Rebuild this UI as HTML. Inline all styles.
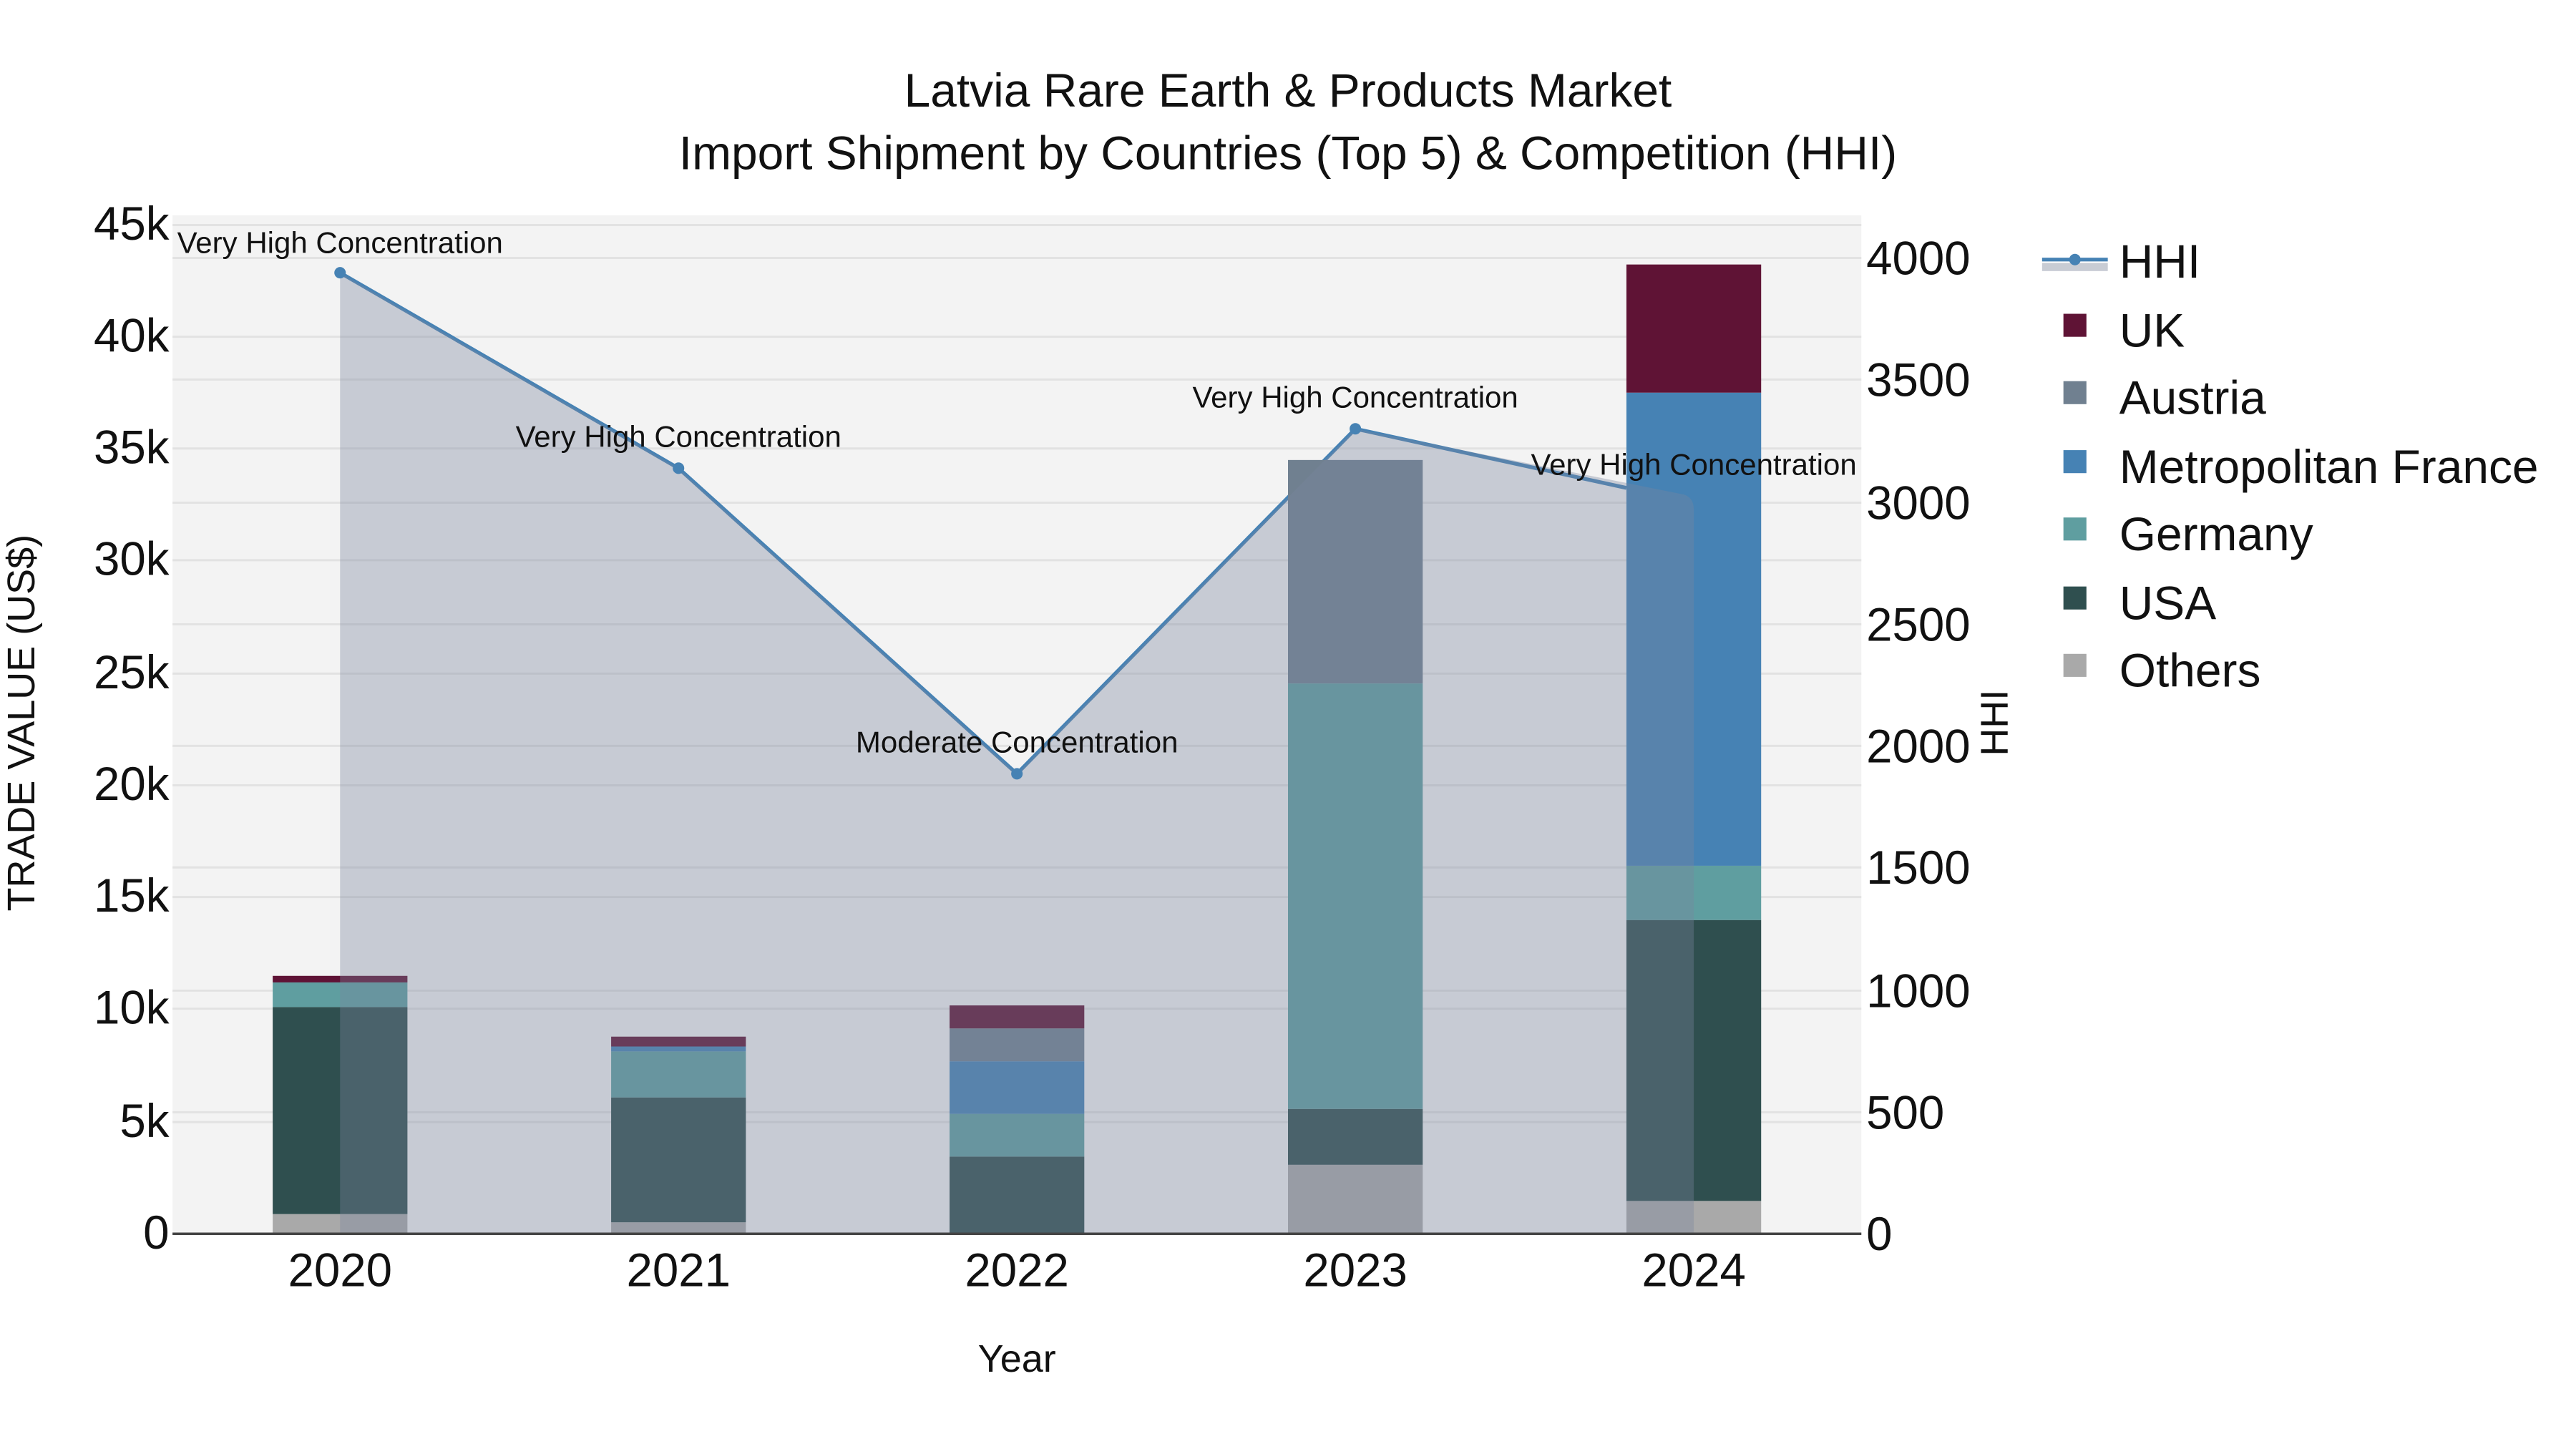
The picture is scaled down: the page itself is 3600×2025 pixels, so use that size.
<!DOCTYPE html>
<html><head><meta charset="utf-8"><style>html,body{margin:0;padding:0;background:#fff}svg{display:block}text{font-family:"Liberation Sans",sans-serif}</style></head><body>
<svg width="3600" height="2025" viewBox="0 0 1568 882" xmlns="http://www.w3.org/2000/svg">
<rect x="0" y="0" width="1568" height="882" fill="#fff"/>
<rect x="105" y="131" width="1028" height="620" fill="#f3f3f3"/>
<g stroke="#e2e2e2" stroke-width="1.3">
<line x1="105" x2="1133" y1="137" y2="137"/><line x1="105" x2="1133" y1="205" y2="205"/><line x1="105" x2="1133" y1="273" y2="273"/><line x1="105" x2="1133" y1="341" y2="341"/><line x1="105" x2="1133" y1="410" y2="410"/><line x1="105" x2="1133" y1="478" y2="478"/><line x1="105" x2="1133" y1="546" y2="546"/><line x1="105" x2="1133" y1="614" y2="614"/><line x1="105" x2="1133" y1="683" y2="683"/>
<line x1="105" x2="1133" y1="157" y2="157"/><line x1="105" x2="1133" y1="231" y2="231"/><line x1="105" x2="1133" y1="306" y2="306"/><line x1="105" x2="1133" y1="380" y2="380"/><line x1="105" x2="1133" y1="454" y2="454"/><line x1="105" x2="1133" y1="528" y2="528"/><line x1="105" x2="1133" y1="603" y2="603"/><line x1="105" x2="1133" y1="677" y2="677"/>
</g>
<polyline points="207,166 413,285 619,471 825,261 990,297" fill="none" stroke="#4682b4" stroke-width="2.3"/>
<g>
<rect x="166" y="739" width="82" height="12" fill="#a9a9a9"/><rect x="166" y="613" width="82" height="126" fill="#2f4f4f"/><rect x="166" y="598" width="82" height="15" fill="#5f9ea0"/><rect x="166" y="594" width="82" height="4" fill="#5f1335"/>
<rect x="372" y="744" width="82" height="7" fill="#a9a9a9"/><rect x="372" y="668" width="82" height="76" fill="#2f4f4f"/><rect x="372" y="640" width="82" height="28" fill="#5f9ea0"/><rect x="372" y="637" width="82" height="3" fill="#4682b4"/><rect x="372" y="631" width="82" height="6" fill="#5f1335"/>
<rect x="578" y="704" width="82" height="47" fill="#2f4f4f"/><rect x="578" y="678" width="82" height="26" fill="#5f9ea0"/><rect x="578" y="646" width="82" height="32" fill="#4682b4"/><rect x="578" y="626" width="82" height="20" fill="#708090"/><rect x="578" y="612" width="82" height="14" fill="#5f1335"/>
<rect x="784" y="709" width="82" height="42" fill="#a9a9a9"/><rect x="784" y="675" width="82" height="34" fill="#2f4f4f"/><rect x="784" y="416" width="82" height="259" fill="#5f9ea0"/><rect x="784" y="280" width="82" height="136" fill="#708090"/>
<rect x="990" y="731" width="82" height="20" fill="#a9a9a9"/><rect x="990" y="560" width="82" height="171" fill="#2f4f4f"/><rect x="990" y="527" width="82" height="33" fill="#5f9ea0"/><rect x="990" y="239" width="82" height="288" fill="#4682b4"/><rect x="990" y="161" width="82" height="78" fill="#5f1335"/>
</g>
<path d="M207,751 L207,166 L413,285 L619,471 L825,261 L1025,301 Q1031,303 1031,310 L1031,751 Z" fill="rgb(123,134,157)" fill-opacity="0.36"/>
<circle cx="207" cy="166" r="3.5" fill="#4682b4"/><circle cx="413" cy="285" r="3.5" fill="#4682b4"/><circle cx="619" cy="471" r="3.5" fill="#4682b4"/><circle cx="825" cy="261" r="3.5" fill="#4682b4"/>
<line x1="105" x2="1133" y1="751" y2="751" stroke="#444" stroke-width="1.5"/>
<g font-size="18.3" fill="#111" text-anchor="middle">
<text x="207" y="154">Very High Concentration</text><text x="413" y="272">Very High Concentration</text><text x="619" y="458">Moderate Concentration</text><text x="825" y="248">Very High Concentration</text><text x="1031" y="289">Very High Concentration</text>
</g>
<g font-size="28.5" fill="#111" text-anchor="end">
<text x="103" y="146">45k</text><text x="103" y="214">40k</text><text x="103" y="282">35k</text><text x="103" y="350">30k</text><text x="103" y="419">25k</text><text x="103" y="487">20k</text><text x="103" y="555">15k</text><text x="103" y="623">10k</text><text x="103" y="692">5k</text><text x="103" y="760">0</text>
</g>
<g font-size="28.5" fill="#111">
<text x="1136" y="167">4000</text><text x="1136" y="241">3500</text><text x="1136" y="316">3000</text><text x="1136" y="390">2500</text><text x="1136" y="464">2000</text><text x="1136" y="538">1500</text><text x="1136" y="613">1000</text><text x="1136" y="687">500</text><text x="1136" y="761">0</text>
</g>
<g font-size="28.5" fill="#111" text-anchor="middle">
<text x="207" y="783">2020</text><text x="413" y="783">2021</text><text x="619" y="783">2022</text><text x="825" y="783">2023</text><text x="1031" y="783">2024</text>
</g>
<text x="619" y="835" font-size="23.5" fill="#111" text-anchor="middle">Year</text>
<text transform="translate(21,440) rotate(-90)" font-size="23.5" fill="#111" text-anchor="middle">TRADE VALUE (US$)</text>
<text transform="translate(1222,440) rotate(-90)" font-size="23.5" fill="#111" text-anchor="middle">HHI</text>
<g font-size="28.7" fill="#111" text-anchor="middle">
<text x="784" y="65">Latvia Rare Earth &amp; Products Market</text>
<text x="784" y="103">Import Shipment by Countries (Top 5) &amp; Competition (HHI)</text>
</g>
<rect x="1243" y="160" width="40" height="5" fill="#c8ccd4"/>
<line x1="1243" x2="1283" y1="158" y2="158" stroke="#4682b4" stroke-width="2.3"/><circle cx="1263" cy="158" r="3.5" fill="#4682b4"/>
<rect x="1256" y="191" width="14" height="14" fill="#5f1335"/><rect x="1256" y="232" width="14" height="14" fill="#708090"/><rect x="1256" y="274" width="14" height="14" fill="#4682b4"/><rect x="1256" y="315" width="14" height="14" fill="#5f9ea0"/><rect x="1256" y="357" width="14" height="14" fill="#2f4f4f"/><rect x="1256" y="398" width="14" height="14" fill="#a9a9a9"/>
<g font-size="28.7" fill="#111">
<text x="1290" y="169">HHI</text><text x="1290" y="211">UK</text><text x="1290" y="252">Austria</text><text x="1290" y="294">Metropolitan France</text><text x="1290" y="335">Germany</text><text x="1290" y="377">USA</text><text x="1290" y="418">Others</text>
</g>
</svg>
</body></html>
